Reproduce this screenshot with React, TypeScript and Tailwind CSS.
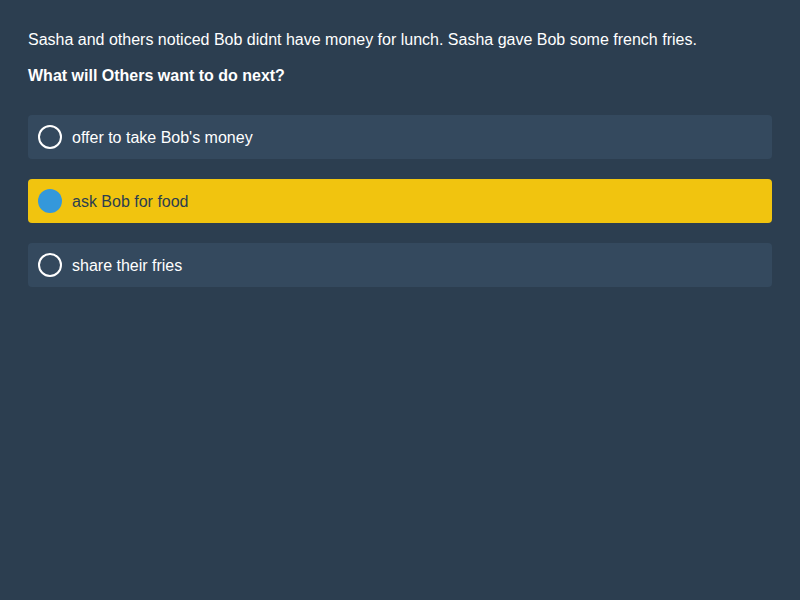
export default function App() {
  const options = [
    { label: "offer to take Bob's money", selected: false },
    { label: "ask Bob for food", selected: true },
    { label: "share their fries", selected: false },
  ];

  return (
    <div className="min-h-[600px] w-full bg-[#2c3e50] px-[28px] pt-[28px] font-['Liberation_Sans',Arial,sans-serif] text-white text-[16px]">
      <p className="leading-[24px]">
        Sasha and others noticed Bob didnt have money for lunch. Sasha gave Bob some french fries.
      </p>
      <p className="mt-[12px] leading-[24px] font-bold">What will Others want to do next?</p>

      <div className="mt-[27px] flex flex-col gap-[20px]">
        {options.map((o) => (
          <div
            key={o.label}
            className={
              o.selected
                ? "flex h-[44px] items-center gap-[10px] rounded-[4px] bg-[#f1c40f] px-[10px] text-[#2c3e50]"
                : "flex h-[44px] items-center gap-[10px] rounded-[4px] bg-[#34495e] px-[10px] text-white"
            }
          >
            {o.selected ? (
              <span className="h-[24px] w-[24px] rounded-full bg-[#3498db]" />
            ) : (
              <span className="h-[24px] w-[24px] rounded-full border-2 border-white" />
            )}
            <span className="pt-[2px]">{o.label}</span>
          </div>
        ))}
      </div>
    </div>
  );
}
